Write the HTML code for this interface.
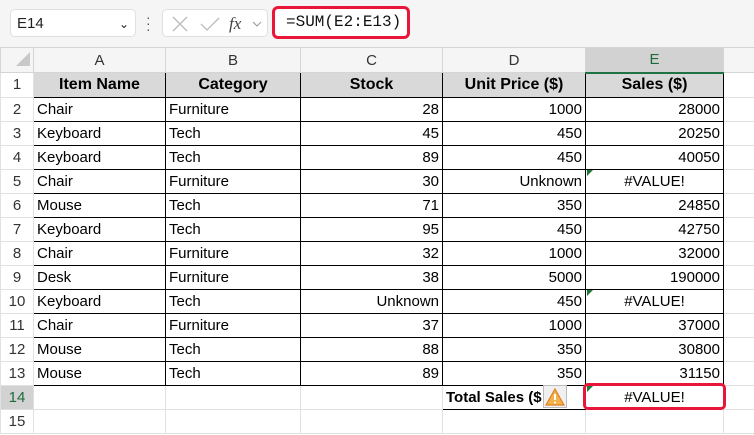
<!DOCTYPE html>
<html><head><style>
body{margin:0;width:754px;height:435px;overflow:hidden;background:#fff;font-family:"Liberation Sans",sans-serif;position:relative}
.top{position:absolute;left:0;top:0;width:754px;height:47px;background:#f5f5f5}
.nb{position:absolute;left:10px;top:9px;width:126px;height:28px;background:#fff;border:1px solid #e0e0e0;border-radius:5px;font-size:15px;line-height:28px;box-sizing:border-box;padding-left:6px;color:#222}
.ib{position:absolute;left:162px;top:9px;width:106px;height:28px;background:#fff;border:1px solid #e0e0e0;border-radius:5px;box-sizing:border-box}
.fb{position:absolute;left:272px;top:6px;width:138px;height:33px;background:#fff;border:3px solid #e8173a;border-radius:6px;box-sizing:border-box;font-family:"Liberation Mono",monospace;font-size:16px;line-height:27px;padding-left:11px;color:#111}
table{position:absolute;left:0;top:47px;width:754px;border-collapse:collapse;table-layout:fixed;font-size:15px}
td{height:23px;padding:0 3px;border:1px solid #e1e1e1;white-space:nowrap;overflow:hidden;color:#000}
tr.ch td{height:21px;background:#f5f5f5;text-align:center;color:#333;border-color:#d5d5d5}
td.rh{text-align:center;color:#333;background:#fff;border-color:#e1e1e1;padding:0}
tr.h td.d{background:#d9d9d9;font-weight:bold;text-align:center;font-size:16px}
td.d{border:1px solid #000}
.r{text-align:right}.c{text-align:center}
</style></head><body>
<div class="top">
<div class="nb">E14<span style="position:absolute;right:6px;top:0;font-size:12px">&#8964;</span></div>
<div style="position:absolute;left:146px;top:14px;color:#555;font-size:14px;line-height:6px">·<br>·<br>·</div>
<div class="ib">
<svg width="106" height="28" style="position:absolute;left:0;top:0"><path d="M10 7 L24 21 M24 7 L10 21" stroke="#bbb" stroke-width="1.3"/><path d="M38 14 L44 20 L56 8" stroke="#bbb" stroke-width="1.3" fill="none"/><text x="66" y="19" font-family="Liberation Serif" font-style="italic" font-size="17" fill="#444">fx</text><path d="M90 12 L94 16 L98 12" stroke="#999" fill="none"/></svg>
</div>
<div class="fb">=SUM(E2:E13)</div>
</div>
<table>
<colgroup><col style="width:33px"><col style="width:132px"><col style="width:135px"><col style="width:142px"><col style="width:143px"><col style="width:138px"><col style="width:31px"></colgroup>
<tr class="ch"><td class="rh" style="background:#f5f5f5"><svg width="30" height="20"><path d="M14 18 L28 18 L28 4 Z" fill="#c8c8c8"/></svg></td><td>A</td><td>B</td><td>C</td><td>D</td><td style="background:#d2d2d2;color:#1d6b3a;border-bottom:2px solid #217346">E</td><td></td></tr>
<tr class="h"><td class="rh">1</td><td class="d">Item Name</td><td class="d">Category</td><td class="d">Stock</td><td class="d">Unit Price ($)</td><td class="d">Sales ($)</td><td></td></tr>
<tr><td class="rh">2</td><td class="d">Chair</td><td class="d">Furniture</td><td class="d r">28</td><td class="d r">1000</td><td class="d r">28000</td><td></td></tr>
<tr><td class="rh">3</td><td class="d">Keyboard</td><td class="d">Tech</td><td class="d r">45</td><td class="d r">450</td><td class="d r">20250</td><td></td></tr>
<tr><td class="rh">4</td><td class="d">Keyboard</td><td class="d">Tech</td><td class="d r">89</td><td class="d r">450</td><td class="d r">40050</td><td></td></tr>
<tr><td class="rh">5</td><td class="d">Chair</td><td class="d">Furniture</td><td class="d r">30</td><td class="d r">Unknown</td><td class="d c">#VALUE!</td><td></td></tr>
<tr><td class="rh">6</td><td class="d">Mouse</td><td class="d">Tech</td><td class="d r">71</td><td class="d r">350</td><td class="d r">24850</td><td></td></tr>
<tr><td class="rh">7</td><td class="d">Keyboard</td><td class="d">Tech</td><td class="d r">95</td><td class="d r">450</td><td class="d r">42750</td><td></td></tr>
<tr><td class="rh">8</td><td class="d">Chair</td><td class="d">Furniture</td><td class="d r">32</td><td class="d r">1000</td><td class="d r">32000</td><td></td></tr>
<tr><td class="rh">9</td><td class="d">Desk</td><td class="d">Furniture</td><td class="d r">38</td><td class="d r">5000</td><td class="d r">190000</td><td></td></tr>
<tr><td class="rh">10</td><td class="d">Keyboard</td><td class="d">Tech</td><td class="d r">Unknown</td><td class="d r">450</td><td class="d c">#VALUE!</td><td></td></tr>
<tr><td class="rh">11</td><td class="d">Chair</td><td class="d">Furniture</td><td class="d r">37</td><td class="d r">1000</td><td class="d r">37000</td><td></td></tr>
<tr><td class="rh">12</td><td class="d">Mouse</td><td class="d">Tech</td><td class="d r">88</td><td class="d r">350</td><td class="d r">30800</td><td></td></tr>
<tr><td class="rh">13</td><td class="d">Mouse</td><td class="d">Tech</td><td class="d r">89</td><td class="d r">350</td><td class="d r">31150</td><td></td></tr>
<tr><td class="rh" style="background:#d2d2d2;color:#1d6b3a">14</td><td></td><td></td><td></td><td class="d" style="font-weight:bold;font-size:15px">Total Sales ($</td><td class="c">#VALUE!</td><td></td></tr>
<tr><td class="rh">15</td><td></td><td></td><td></td><td></td><td></td><td></td></tr>
</table>
<svg style="position:absolute;left:0;top:0" width="754" height="435">
<path d="M587 170 L593 170 L587 176Z" fill="#1f7a3a"/>
<path d="M587 290 L593 290 L587 296Z" fill="#1f7a3a"/>
<path d="M587 386 L593 386 L587 392Z" fill="#1f7a3a"/>
</svg>
<div style="position:absolute;left:543px;top:385px;width:24px;height:23px;background:#f0f0f0;border:1px solid #bbb;box-sizing:border-box">
<svg width="22" height="21"><path d="M11 3 L20 19 L2 19 Z" fill="#f6b24a" stroke="#e08020" stroke-width="1.2"/><path d="M11 8 L11 14" stroke="#fff" stroke-width="2"/><circle cx="11" cy="16.5" r="1.1" fill="#fff"/></svg>
</div>
<div style="position:absolute;left:583px;top:383px;width:143px;height:27px;border:3px solid #e8173a;border-radius:5px;box-sizing:border-box"></div>
</body></html>
